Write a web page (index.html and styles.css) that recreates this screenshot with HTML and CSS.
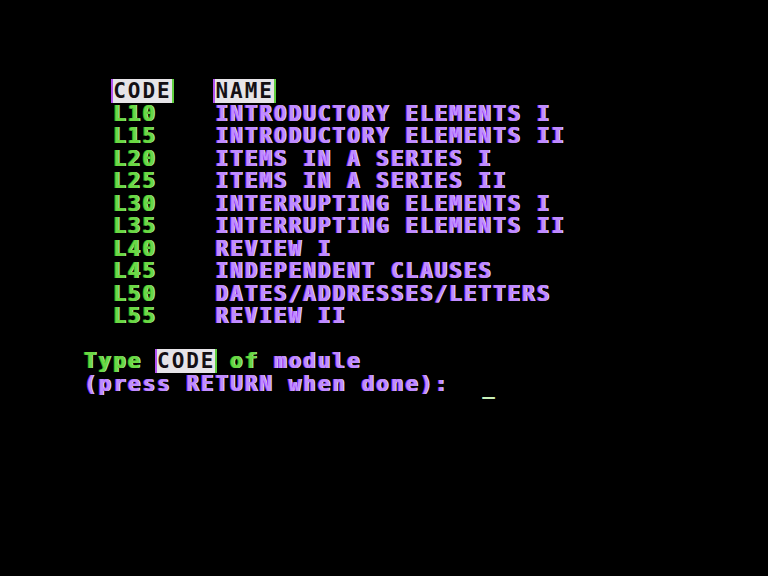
FILE: index.html
```html
<!DOCTYPE html>
<html>
<head>
<meta charset="utf-8">
<link rel="stylesheet" href="styles.css">
</head>
<body>
<div class="screen">
<div class="line">  <span class="inv">CODE</span>   <span class="inv">NAME</span></div>
<div class="line">  <span class="code">L10</span>    <span class="name">INTRODUCTORY ELEMENTS I</span></div>
<div class="line">  <span class="code">L15</span>    <span class="name">INTRODUCTORY ELEMENTS II</span></div>
<div class="line">  <span class="code">L20</span>    <span class="name">ITEMS IN A SERIES I</span></div>
<div class="line">  <span class="code">L25</span>    <span class="name">ITEMS IN A SERIES II</span></div>
<div class="line">  <span class="code">L30</span>    <span class="name">INTERRUPTING ELEMENTS I</span></div>
<div class="line">  <span class="code">L35</span>    <span class="name">INTERRUPTING ELEMENTS II</span></div>
<div class="line">  <span class="code">L40</span>    <span class="name">REVIEW I</span></div>
<div class="line">  <span class="code">L45</span>    <span class="name">INDEPENDENT CLAUSES</span></div>
<div class="line">  <span class="code">L50</span>    <span class="name">DATES/ADDRESSES/LETTERS</span></div>
<div class="line">  <span class="code">L55</span>    <span class="name">REVIEW II</span></div>
<div class="line"> </div>
<div class="line"><span class="code">Type</span> <span class="inv">CODE</span> <span class="code">of</span> <span class="name">module</span></div>
<div class="line"><span class="name">(press RETURN when done):</span>  <span class="cursor">_</span></div>
</div>
</body>
</html>
```

FILE: styles.css
```css
html, body {
  margin: 0;
  padding: 0;
  background: #000;
}
body {
  width: 768px;
  height: 576px;
  overflow: hidden;
}
.screen {
  padding: 80px 0 0 84px;
  font-family: "DejaVu Sans Mono", "Liberation Mono", monospace;
  font-weight: bold;
  font-size: 21px;
  letter-spacing: 1.96px;
  line-height: 22.5px;
  color: #e6e0ee;
}
.line {
  white-space: pre;
  height: 22.5px;
}
.code {
  color: #6cd844;
  text-shadow: -1px 0 #34b01c, 1px 0 #b0ec98;
}
.name {
  color: #c08cff;
  text-shadow: -1px 0 #9030f0, 1px 0 #e4d8ff;
}
.inv {
  background: #e6e4e8;
  color: #141014;
  box-shadow: -2px 0 0 #b050f0, 2px 0 0 #60d040;
}
.cursor {
  display: inline-block;
  transform: translate(4px, 3px);
  color: #c8f0b8;
}
```
